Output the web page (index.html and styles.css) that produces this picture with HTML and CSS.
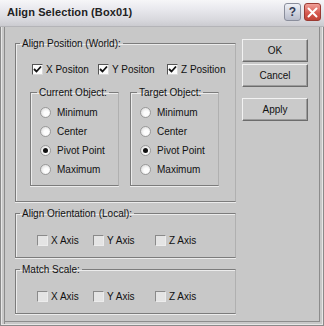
FILE: index.html
```html
<!DOCTYPE html>
<html lang="en">
<head>
    <meta charset="UTF-8">
    <title>Align Selection (Box01)</title>
    <link rel="stylesheet" href="styles.css">
</head>
<body>

<div class="window">
    <div class="titlebar">
        <span class="title">Align Selection (Box01)</span>
        <div class="caption-buttons">
            <span class="cap-btn help">?</span>
            <span class="cap-btn close">
                <svg width="11" height="11" viewBox="0 0 11 11">
                    <path d="M1.5 1.5 L9.5 9.5 M9.5 1.5 L1.5 9.5" stroke="#fff" stroke-width="2" stroke-linecap="round"/>
                </svg>
            </span>
        </div>
    </div>

    <div class="frame">
        <div class="left">
            <fieldset class="group pos-group">
                <legend>Align Position (World):</legend>
                <div class="check-row pos-row">
                    <label class="check w66"><span class="box on"><svg width="9" height="9" viewBox="0 0 9 9"><path d="M1 4 L3.5 6.5 L8 1.5" fill="none" stroke="#111" stroke-width="1.8"/></svg></span>X Positon</label>
                    <label class="check w69"><span class="box on"><svg width="9" height="9" viewBox="0 0 9 9"><path d="M1 4 L3.5 6.5 L8 1.5" fill="none" stroke="#111" stroke-width="1.8"/></svg></span>Y Positon</label>
                    <label class="check"><span class="box on"><svg width="9" height="9" viewBox="0 0 9 9"><path d="M1 4 L3.5 6.5 L8 1.5" fill="none" stroke="#111" stroke-width="1.8"/></svg></span>Z Position</label>
                </div>
                <div class="sub-row">
                    <fieldset class="group sub">
                        <legend>Current Object:</legend>
                        <label class="radio"><span class="dot"></span>Minimum</label>
                        <label class="radio"><span class="dot"></span>Center</label>
                        <label class="radio"><span class="dot on"></span>Pivot Point</label>
                        <label class="radio"><span class="dot"></span>Maximum</label>
                    </fieldset>
                    <fieldset class="group sub">
                        <legend>Target Object:</legend>
                        <label class="radio"><span class="dot"></span>Minimum</label>
                        <label class="radio"><span class="dot"></span>Center</label>
                        <label class="radio"><span class="dot on"></span>Pivot Point</label>
                        <label class="radio"><span class="dot"></span>Maximum</label>
                    </fieldset>
                </div>
            </fieldset>

            <fieldset class="group small-group">
                <legend>Align Orientation (Local):</legend>
                <div class="check-row axis-row">
                    <label class="check w56"><span class="box"></span>X Axis</label>
                    <label class="check w62"><span class="box"></span>Y Axis</label>
                    <label class="check"><span class="box"></span>Z Axis</label>
                </div>
            </fieldset>

            <fieldset class="group small-group">
                <legend>Match Scale:</legend>
                <div class="check-row axis-row">
                    <label class="check w56"><span class="box"></span>X Axis</label>
                    <label class="check w62"><span class="box"></span>Y Axis</label>
                    <label class="check"><span class="box"></span>Z Axis</label>
                </div>
            </fieldset>
        </div>

        <div class="buttons">
            <button class="btn">OK</button>
            <button class="btn">Cancel</button>
            <button class="btn apply">Apply</button>
        </div>
    </div>
</div>

</body>
</html>
```

FILE: styles.css
```css
body {
    margin: 0;
    font-family: "Liberation Sans", Arial, sans-serif;
    font-size: 10px;
    color: #111;
    background: #c8c8c8;
}
.window {
    width: 324px;
    height: 326px;
    display: flex;
    flex-direction: column;
    background: #c8c8c8;
}
.titlebar {
    height: 27px;
    flex: none;
    display: flex;
    align-items: center;
    justify-content: space-between;
    padding: 0 3px 2px 7px;
    box-sizing: border-box;
    background: linear-gradient(#f6f6f8, #e9e9ee 35%, #d9d9de 75%, #cbcbd0);
    border-bottom: 1px solid #b4b4b8;
}
.title {
    font-weight: bold;
    font-size: 11px;
    letter-spacing: 0.1px;
    color: #222;
}
.caption-buttons {
    display: flex;
    gap: 3px;
}
.cap-btn {
    width: 17px;
    height: 18px;
    border-radius: 3px;
    display: flex;
    align-items: center;
    justify-content: center;
    box-sizing: border-box;
}
.help {
    background: linear-gradient(#eef0f6, #b8bccb);
    border: 1px solid #8a8e9c;
    font-weight: bold;
    font-size: 12px;
    color: #333a55;
}
.close {
    background: linear-gradient(#f0a099, #d4564c 60%, #c04438);
    border: 1px solid #9a3a32;
}
.frame {
    flex: 1;
    display: flex;
    align-items: flex-start;
    padding: 10px 0 0 14px;
    border: 1px solid #8a8a8a;
    border-top: none;
    box-shadow: inset 1px 0 0 #e6e6e6, inset -1px -1px 0 #e6e6e6, inset 3px 0 0 #c8c8c8, inset 4px 0 0 #8c8c8c, inset -3px -3px 0 #c8c8c8, inset -4px -4px 0 #8c8c8c;
}
.left {
    width: 221px;
    display: flex;
    flex-direction: column;
    gap: 5px;
}
.group {
    margin: 0;
    padding: 0;
    min-width: 0;
    border: 1px solid #7c7c7c;
    border-right-color: #b0b0b0;
    box-shadow: inset 1px 1px 0 #ececec, 0 1px 0 #ececec;
}
legend {
    padding: 0 2px;
    margin-left: 4px;
    line-height: 13px;
    font-size: 10px;
    white-space: nowrap;
}
.pos-group {
    height: 165px;
    box-sizing: border-box;
}
.check-row {
    display: flex;
    align-items: center;
}
.pos-row {
    margin: 12px 0 0 16px;
}
.check {
    display: flex;
    align-items: center;
    gap: 3px;
    height: 14px;
    white-space: nowrap;
}
.w66 { width: 66px; }
.w69 { width: 69px; }
.w56 { width: 56px; }
.w62 { width: 62px; }
.box {
    width: 11px;
    height: 11px;
    box-sizing: border-box;
    border: 1px solid;
    border-color: #8a8a8a #ececec #ececec #8a8a8a;
    background: #e4e4e4;
    display: flex;
    align-items: center;
    justify-content: center;
}
.box.on {
    background: #fbfbfb;
    border-color: #555 #d8d8d8 #d8d8d8 #555;
}
.sub-row {
    display: flex;
    gap: 11px;
    margin: 10px 0 0 14px;
}
.sub {
    width: 89px;
    height: 100px;
    box-sizing: border-box;
    padding: 6px 0 0 9px;
    display: flex;
    flex-direction: column;
    gap: 5px;
}
.sub legend {
    margin-left: -3px;
}
.radio {
    display: flex;
    align-items: center;
    gap: 6px;
    height: 14px;
    white-space: nowrap;
}
.dot {
    width: 11px;
    height: 11px;
    box-sizing: border-box;
    border-radius: 50%;
    border: 1px solid #9a9a9a;
    background: radial-gradient(circle at 60% 60%, #fdfdfd 30%, #d0d0d0);
    display: flex;
    align-items: center;
    justify-content: center;
}
.dot.on::after {
    content: "";
    width: 5px;
    height: 5px;
    border-radius: 50%;
    background: #111;
}
.small-group {
    height: 51px;
    box-sizing: border-box;
}
.axis-row {
    margin: 13px 0 0 21px;
}
.buttons {
    margin: 2px 0 0 6px;
    display: flex;
    flex-direction: column;
}
.btn {
    width: 66px;
    height: 23px;
    margin-bottom: 2px;
    font-family: "Liberation Sans", Arial, sans-serif;
    font-size: 10px;
    color: #111;
    background: #cacaca;
    border: 1px solid;
    border-color: #f2f2f2 #6c6c6c #6c6c6c #f2f2f2;
    box-shadow: inset -1px -1px 0 #9c9c9c;
    padding: 0;
}
.apply {
    margin-top: 9px;
}
```
